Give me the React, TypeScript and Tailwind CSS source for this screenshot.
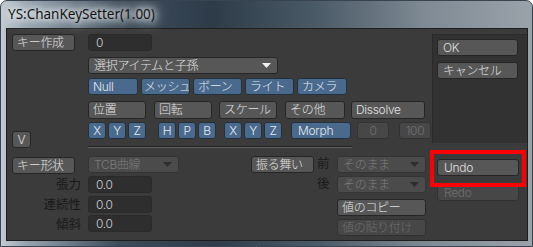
import React from 'react';

type Variant = 'gray' | 'blue' | 'off' | 'input';

const variantClass: Record<Variant, string> = {
  gray: 'bg-[#575757] text-[#e0e0e0] border-[#262626]',
  blue: 'bg-[#4a6a8d] text-[#e4e9ee] border-[#24303c]',
  off: 'bg-[#474747] text-[#6f6f6f] border-[#323232]',
  input: 'bg-[#2e2e2e] text-[#c8ccd4] border-[#2a2a2a]',
};

const Btn: React.FC<{
  label: string;
  w: string;
  h?: string;
  v?: Variant;
  center?: boolean;
  className?: string;
}> = ({ label, w, h = 'h-[17px]', v = 'gray', center, className = '' }) => (
  <div
    className={`${w} ${h} ${variantClass[v]} ${className} shrink-0 flex items-center border rounded-[3px] text-[12px] font-light tracking-[-0.3px] leading-none whitespace-nowrap overflow-hidden ${
      center ? 'justify-center' : 'pl-[4px]'
    }`}
  >
    {label}
  </div>
);

const Drop: React.FC<{ label: string; w: string; off?: boolean; className?: string }> = ({
  label,
  w,
  off,
  className = '',
}) => (
  <div
    className={`${w} ${className} h-[17px] shrink-0 flex items-center justify-between border rounded-[3px] text-[12px] font-light tracking-[-0.3px] leading-none pl-[5px] pr-[6px] ${
      off ? 'bg-[#4b4b4b] text-[#7c7c7c] border-[#343434]' : 'bg-[#575757] text-[#e0e0e0] border-[#262626]'
    }`}
  >
    <span>{label}</span>
    <svg width="9" height="5" viewBox="0 0 9 5">
      <path d="M0 0 H9 L4.5 5 Z" fill={off ? '#2e2e2e' : '#eeeeee'} />
    </svg>
  </div>
);

const Label: React.FC<{ text: string; className?: string }> = ({ text, className = '' }) => (
  <div className={`h-[17px] flex items-center justify-end text-[12.5px] leading-none text-[#1a1a1a] ${className}`}>
    {text}
  </div>
);

export default function App() {
  return (
    <div
      className="w-[533px] h-[247px] overflow-hidden rounded-t-[7px] border border-[#3a4450] bg-[linear-gradient(90deg,#c2cbd3_0%,#94a2ae_5%,#3e4d5c_22%,#2e3c4a_40%,#4c5b68_60%,#7f8a94_80%,#9aa2aa_100%)]"
      style={{ fontFamily: 'Inter, "Noto Sans CJK JP", sans-serif' }}
    >
      {/* title bar */}
      <div className="h-[27px] flex items-center pl-[7px]">
        <span
          className="text-[13.5px] text-[#141414] [text-shadow:0_0_6px_#fff,0_0_10px_#fff,0_0_14px_#dfe6ec,0_0_20px_#dfe6ec]"
          style={{ fontFamily: '"Noto Sans", "Liberation Sans", sans-serif' }}
        >
          YS:ChanKeySetter(1.00)
        </span>
      </div>

      {/* body */}
      <div className="ml-[5px] mr-[4px] h-[213px] bg-[#3b3b3b] border border-[#1e1e1e] flex flex-col">
        {/* top section */}
        <div className="flex h-[121px]">
          {/* left column */}
          <div className="w-[81px] shrink-0 flex flex-col pl-[5px]">
            <Btn label="キー作成" w="w-[63px]" className="mt-[5px]" />
            <Btn label="V" w="w-[19px]" h="h-[17px]" center className="mt-[80px]" />
          </div>

          {/* main column */}
          <div className="w-[344px] shrink-0 flex flex-col">
            <Btn label="0" v="input" w="w-[64px]" className="mt-[5px] pl-[7px]" />
            <Drop label="選択アイテムと子孫" w="w-[190px]" className="mt-[6px]" />
            <div className="flex gap-[3px] mt-[4px]">
              <Btn label="Null" v="blue" w="w-[50px]" />
              <Btn label="メッシュ" v="blue" w="w-[49px]" className="!pl-[2px]" />
              <Btn label="ボーン" v="blue" w="w-[49px]" />
              <Btn label="ライト" v="blue" w="w-[49px]" />
              <Btn label="カメラ" v="blue" w="w-[50px]" />
            </div>
            <div className="flex mt-[6px]">
              <Btn label="位置" w="w-[58px]" h="h-[18px]" />
              <Btn label="回転" w="w-[58px]" h="h-[18px]" className="ml-[8px]" />
              <Btn label="スケール" w="w-[58px]" h="h-[18px]" className="ml-[7px]" />
              <Btn label="その他" w="w-[60px]" h="h-[18px]" className="ml-[8px]" />
              <Btn label="Dissolve" w="w-[74px]" h="h-[18px]" className="ml-[6px]" />
            </div>
            <div className="flex mt-[3px]">
              <div className="flex gap-[2px]">
                <Btn label="X" v="blue" w="w-[18px]" center />
                <Btn label="Y" v="blue" w="w-[18px]" center />
                <Btn label="Z" v="blue" w="w-[18px]" center />
              </div>
              <div className="flex gap-[2px] ml-[12px]">
                <Btn label="H" v="blue" w="w-[18px]" center />
                <Btn label="P" v="blue" w="w-[18px]" center />
                <Btn label="B" v="blue" w="w-[18px]" center />
              </div>
              <div className="flex gap-[2px] ml-[8px]">
                <Btn label="X" v="blue" w="w-[18px]" center />
                <Btn label="Y" v="blue" w="w-[18px]" center />
                <Btn label="Z" v="blue" w="w-[18px]" center />
              </div>
              <Btn label="Morph" v="blue" w="w-[60px]" className="ml-[9px] pl-[6px]" />
              <Btn label="0" v="off" w="w-[32px]" center className="ml-[6px]" />
              <Btn label="100" v="off" w="w-[32px]" center className="ml-[10px]" />
            </div>
            <div className="mt-[7px] w-[264px] h-[2px] border-t border-[#262626] border-b border-b-[#5a5a5a]" />
          </div>

          {/* right panel */}
          <div className="flex-1 mt-[5px] h-[109px] bg-[#323232] border-l border-t border-[#2a2a2a] flex flex-col pl-[4px] pr-[9px]">
            <Btn label="OK" w="w-[81px]" className="mt-[4px] pl-[5px]" />
            <Btn label="キャンセル" w="w-[81px]" className="mt-[6px] pl-[5px]" />
          </div>
        </div>

        {/* bottom section */}
        <div className="flex">
          {/* labels + key shape */}
          <div className="w-[81px] shrink-0 flex flex-col">
            <Btn label="キー形状" w="w-[63px]" className="mt-[7px] ml-[5px]" />
            <Label text="張力" className="mt-[3px] pr-[7px]" />
            <Label text="連続性" className="mt-[3px] pr-[7px]" />
            <Label text="傾斜" className="mt-[3px] pr-[7px]" />
          </div>

          {/* inputs */}
          <div className="w-[163px] shrink-0 flex flex-col">
            <Drop label="TCB曲線" w="w-[91px]" off className="mt-[6px]" />
            <Btn label="0.0" v="input" w="w-[64px]" className="mt-[3px] pl-[7px]" />
            <Btn label="0.0" v="input" w="w-[64px]" className="mt-[3px] pl-[7px]" />
            <Btn label="0.0" v="input" w="w-[64px]" className="mt-[2px] pl-[7px]" />
          </div>

          {/* behaviour */}
          <div className="w-[86px] shrink-0 flex">
            <Btn label="振る舞い" w="w-[63px]" className="mt-[6px]" />
            <div className="flex flex-col ml-[3px] mt-[6px]">
              <Label text="前" />
              <Label text="後" className="mt-[3px]" />
            </div>
          </div>

          {/* pre/post + copy */}
          <div className="w-[93px] shrink-0 flex flex-col">
            <Drop label="そのまま" w="w-[89px]" off className="mt-[6px]" />
            <Drop label="そのまま" w="w-[89px]" off className="mt-[3px]" />
            <Btn label="値のコピー" w="w-[89px]" className="mt-[6px]" />
            <Btn label="値の貼り付け" v="off" w="w-[89px]" className="mt-[3px]" />
          </div>

          {/* undo / redo */}
          <div className="flex flex-col">
            <div className="relative z-10 w-[96px] h-[37px] border-[4px] border-[#ff0000] pl-[3px] pt-[5px]">
              <Btn label="Undo" w="w-[82px]" className="pl-[6px]" />
            </div>
            <Btn label="Redo" v="off" w="w-[82px]" h="h-[16px]" className="ml-[7px] -mt-[2px] pl-[6px]" />
          </div>
        </div>
      </div>
    </div>
  );
}
